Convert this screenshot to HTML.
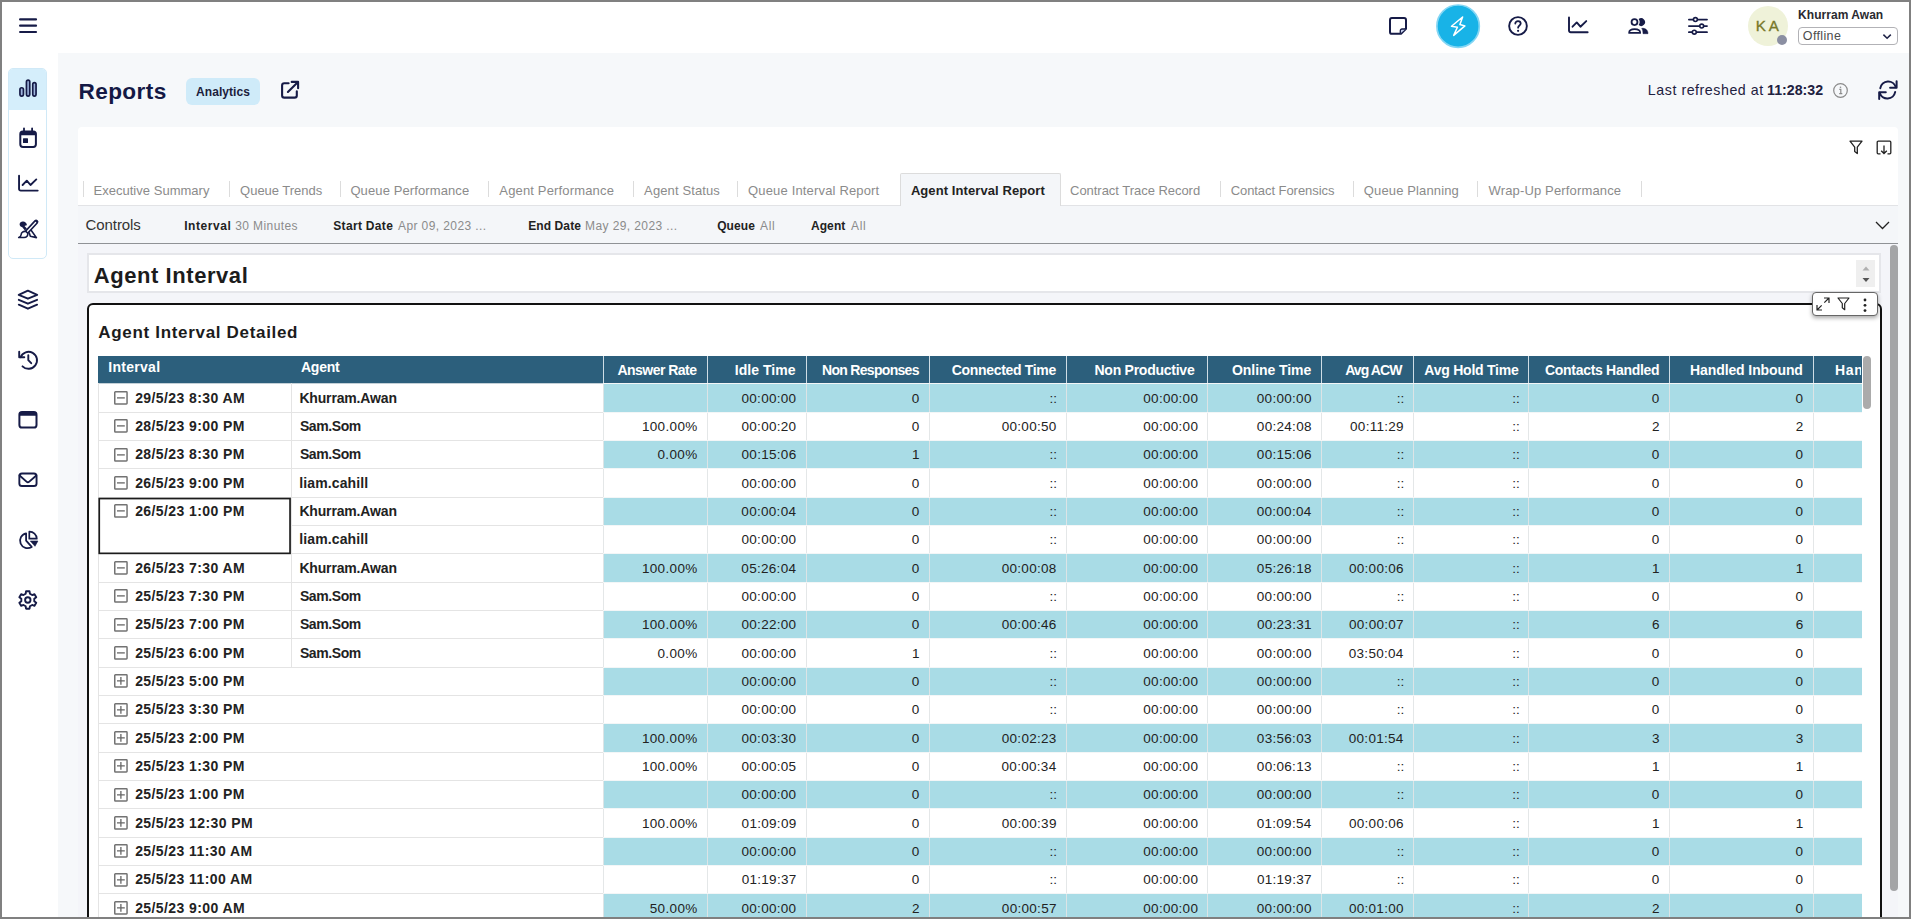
<!DOCTYPE html>
<html lang="en"><head><meta charset="utf-8"><title>Reports - Agent Interval Report</title>
<style>
html,body{margin:0;padding:0}
body{width:1911px;height:919px;overflow:hidden;position:relative;background:#f6f8fa;font-family:"Liberation Sans",sans-serif;}
.t{position:absolute;white-space:nowrap;display:block}
.abs{position:absolute}
svg{position:absolute;overflow:visible}
.ic{fill:none;stroke:#161b47;stroke-width:1.8;stroke-linecap:round;stroke-linejoin:round}
.frame{position:absolute;left:0;top:0;width:1907px;height:915px;border:2px solid #808080;z-index:50;pointer-events:none}
</style></head><body>

<div class="abs" style="left:0;top:0;width:1911px;height:53px;background:#fff"></div>
<div class="abs" style="left:0;top:0;width:58px;height:919px;background:#fff"></div>
<svg style="left:0;top:0" width="60" height="50" viewBox="0 0 60 50"><path class="ic" style="stroke-width:2.2" d="M20.100 19.400H36M20.100 25.700H36M20.100 32H36"/></svg>
<div class="abs" style="left:8.300px;top:67.800px;width:36.400px;height:189px;border:1.500px solid #d0e9f7;border-radius:5px;background:#fff;overflow:hidden"><div style="height:41px;background:#d5eefb"></div></div>
<svg style="left:0;top:0" width="1911" height="919" viewBox="0 0 1911 919"><rect x="19.95" y="87.75" width="3.50" height="8.30" rx="1.7" fill="#9fb4dd" stroke="#161b47" stroke-width="1.7"/><rect x="26.45" y="80.05" width="3.30" height="16.00" rx="1.7" fill="#9fb4dd" stroke="#161b47" stroke-width="1.7"/><rect x="32.75" y="82.55" width="3.30" height="13.50" rx="1.7" fill="#9fb4dd" stroke="#161b47" stroke-width="1.7"/><rect x="20.30" y="131.60" width="15.60" height="15.30" rx="2.6" fill="none" stroke="#161b47" stroke-width="2.0"/><path d="M20 135.3V133.200a1.800 1.800 0 0 1 1.800-1.800H34.400a1.800 1.800 0 0 1 1.800 1.800V135.300z" fill="#161b47"/><path d="M24 128.300V131M32.100 128.300V131" fill="none" stroke="#161b47" stroke-width="1.8" stroke-linecap="round" stroke-linejoin="round" /><rect x="23" y="138.200" width="5" height="4.900" rx=".5" fill="#161b47"/><path d="M19.05 175.80V188.90a1.700 1.700 0 0 0 1.700 1.700H37.70" fill="none" stroke="#161b47" stroke-width="1.9" stroke-linecap="round" stroke-linejoin="round" /><path d="M22.60 185.00L26.80 180.70L30.50 185.00L36.30 179.40" fill="none" stroke="#161b47" stroke-width="1.9" stroke-linecap="round" stroke-linejoin="round" /><path d="M19.600 224.300c0-1.900 1.800-3 3.600-2.800 1.800.2 3.200 1.300 3.600 2.900.2.700-.4 1.100-1 1.200l-1.300.3 2.400 2.600-2 1.900-2.600-3.200c-1.600-.2-2.700-1.400-2.700-2.900z" fill="#161b47"/><path d="M36.100 221.900L26.200 232.600" fill="none" stroke="#161b47" stroke-width="4.6" stroke-linecap="round" stroke-linejoin="round" stroke-linecap="butt"/><path d="M35.600 222.500L27.500 231.200" fill="none" stroke="#fff" stroke-width="1.3" stroke-linecap="round" stroke-linejoin="round" /><path d="M25.800 231.500c-2.700-.5-4.500 1-4.700 3.200-.1 1.300-.9 2.300-2.400 2.800h5.300c2.600 0 4.300-2 3.700-4.400z" fill="#fff" stroke="#161b47" stroke-width="1.6" stroke-linecap="round" stroke-linejoin="round" /><path d="M31.300 230.500L36.400 237.600L30.300 236.200L29.300 233" fill="none" stroke="#161b47" stroke-width="1.6" stroke-linecap="round" stroke-linejoin="round" /><path d="M27.900 290.600L37.200 294.800L27.900 298.700L18.700 294.800z" fill="none" stroke="#161b47" stroke-width="1.9" stroke-linecap="round" stroke-linejoin="round" /><path d="M18.800 299.800L27.900 303.700L37.100 299.800" fill="none" stroke="#161b47" stroke-width="1.9" stroke-linecap="round" stroke-linejoin="round" /><path d="M18.800 304.700L27.900 308.700L37.100 304.700" fill="none" stroke="#161b47" stroke-width="1.9" stroke-linecap="round" stroke-linejoin="round" /><path d="M20.600 357.200A8.500 8.500 0 1 1 22.500 366.300" fill="none" stroke="#161b47" stroke-width="1.9" stroke-linecap="round" stroke-linejoin="round" /><path d="M19.200 351.800V357.200H24.300" fill="none" stroke="#161b47" stroke-width="1.9" stroke-linecap="round" stroke-linejoin="round" /><path d="M28.300 355.300V360.200L31.200 363.200" fill="none" stroke="#161b47" stroke-width="1.9" stroke-linecap="round" stroke-linejoin="round" /><rect x="19.40" y="412.10" width="17.10" height="15.40" rx="2.6" fill="none" stroke="#161b47" stroke-width="2.0"/><path d="M19.200 415.800V413.800a1.900 1.900 0 0 1 1.900-1.900H34.800a1.900 1.900 0 0 1 1.900 1.900V415.800z" fill="#161b47"/><rect x="19.35" y="473.55" width="17.20" height="12.50" rx="2.6" fill="none" stroke="#161b47" stroke-width="1.9"/><path d="M19.600 475.500L26.500 481.600a2.100 2.100 0 0 0 2.800 0L36.300 475.500" fill="none" stroke="#161b47" stroke-width="1.9" stroke-linecap="round" stroke-linejoin="round" /><path d="M26.100 533.300A7.500 7.500 0 1 0 31.700 546.900L26.100 540.600z" fill="none" stroke="#161b47" stroke-width="1.8" stroke-linecap="round" stroke-linejoin="round" /><path d="M29.300 531.700V538.700H36.800A7.300 7.300 0 0 0 29.300 531.700z" fill="none" stroke="#161b47" stroke-width="1.7" stroke-linecap="round" stroke-linejoin="round" /><path d="M30.300 541H37.900L35 546.300z" fill="#161b47" stroke="#161b47" stroke-width=".6" stroke-linejoin="round"/><path d="M26.04 591.28L29.56 591.28L29.91 593.74L32.16 595.05L34.48 594.11L36.24 597.16L34.27 598.70L34.27 601.30L36.24 602.84L34.48 605.89L32.16 604.95L29.91 606.26L29.56 608.72L26.04 608.72L25.69 606.26L23.44 604.95L21.12 605.89L19.36 602.84L21.33 601.30L21.33 598.70L19.36 597.16L21.12 594.11L23.44 595.05L25.69 593.74z" fill="none" stroke="#161b47" stroke-width="1.9" stroke-linecap="round" stroke-linejoin="round" /><circle cx="27.800" cy="600" r="2.700" fill="none" stroke="#161b47" stroke-width="1.900"/><path d="M1391.900 18.100H1404.100a1.900 1.900 0 0 1 1.900 1.900V28.800L1401 33.800H1391.900a1.900 1.900 0 0 1-1.900-1.900V20a1.900 1.900 0 0 1 1.900-1.900z" fill="none" stroke="#161b47" stroke-width="2.0" stroke-linecap="round" stroke-linejoin="round" /><path d="M1400.300 33.600V30.700a1.700 1.700 0 0 1 1.700-1.700H1405.700" fill="#c6d0ee" stroke="#161b47" stroke-width="1.300" stroke-linejoin="round"/><circle cx="1458.100" cy="26.200" r="21.200" fill="#18b3e7" stroke="#83d6f4" stroke-width="1.700"/><path d="M1462.600 17L1451.500 26.300L1457.400 27.200L1453.700 35.400L1464.900 25.900L1459.900 24.600z" fill="none" stroke="#fff" stroke-width="1.5" stroke-linecap="round" stroke-linejoin="round" /><circle cx="1518" cy="26" r="8.850" fill="none" stroke="#161b47" stroke-width="1.900"/><path d="M1515.300 23.600a2.700 2.500 0 0 1 5.400 0c0 1.900-2.600 1.900-2.600 4.100" fill="none" stroke="#161b47" stroke-width="1.8" stroke-linecap="round" stroke-linejoin="round" /><circle cx="1518.100" cy="30.800" r="1.100" fill="#161b47"/><path d="M1569.00 17.50V30.60a1.700 1.700 0 0 0 1.700 1.700H1587.65" fill="none" stroke="#161b47" stroke-width="1.9" stroke-linecap="round" stroke-linejoin="round" /><path d="M1572.55 26.70L1576.75 22.40L1580.45 26.70L1586.25 21.10" fill="none" stroke="#161b47" stroke-width="1.9" stroke-linecap="round" stroke-linejoin="round" /><circle cx="1634.500" cy="22.100" r="2.950" fill="none" stroke="#161b47" stroke-width="1.800"/><path d="M1629.100 32.900c0-2.700 2.400-3.700 5.500-3.700s5.600 1 5.600 3.700z" fill="none" stroke="#161b47" stroke-width="1.7" stroke-linecap="round" stroke-linejoin="round" /><path d="M1638.620 19.090A3.900 3.900 0 1 1 1638.620 25.110A5.100 5.100 0 0 0 1638.620 19.090z" fill="#161b47"/><path d="M1641.700 28.400c3.600-.6 6.300 1.600 6.300 5.300h-5c0-2.400-.3-3.800-1.300-5.300z" fill="#161b47" stroke="#161b47" stroke-width=".5" stroke-linejoin="round"/><path d="M1688.900 19.600H1707M1688.900 26.100H1707M1688.900 32.200H1707" fill="none" stroke="#161b47" stroke-width="1.8" stroke-linecap="round" stroke-linejoin="round" /><circle cx="1695.4" cy="19.6" r="1.950" fill="#fff" stroke="#161b47" stroke-width="1.600"/><circle cx="1701.7" cy="26.1" r="1.950" fill="#fff" stroke="#161b47" stroke-width="1.600"/><circle cx="1694.3" cy="32.2" r="1.950" fill="#fff" stroke="#161b47" stroke-width="1.600"/><path d="M288.600 83.300H284.300a2.200 2.200 0 0 0-2.200 2.200V95.400a2.200 2.200 0 0 0 2.200 2.200H294.600a2.200 2.200 0 0 0 2.200-2.200V91.300" fill="none" stroke="#161b47" stroke-width="2.1" stroke-linecap="round" stroke-linejoin="round" /><path d="M287.900 92L298 81.900M291.700 81.900H298.100V88.200" fill="none" stroke="#161b47" stroke-width="2.1" stroke-linecap="round" stroke-linejoin="round" /><path d="M1880.300 88.200A8 8 0 0 1 1895.900 87.300" fill="none" stroke="#161b47" stroke-width="2.0" stroke-linecap="round" stroke-linejoin="round" /><path d="M1896.600 81.300V87.800H1890.100" fill="none" stroke="#161b47" stroke-width="2.0" stroke-linecap="round" stroke-linejoin="round" /><path d="M1895.200 91.900A8 8 0 0 1 1879.700 92.900" fill="none" stroke="#161b47" stroke-width="2.0" stroke-linecap="round" stroke-linejoin="round" /><path d="M1879.200 99V92.300H1885.800" fill="none" stroke="#161b47" stroke-width="2.0" stroke-linecap="round" stroke-linejoin="round" /></svg>
<div class="abs" style="left:1748px;top:6px;width:40px;height:40px;border-radius:50%;background:#eff2d9"></div>
<span class="t" style="left:1755.78px;top:16.90px;font-size:15.2px;line-height:17px;color:#77782a;letter-spacing:2.762px;-webkit-text-stroke:0.35px #77782a;">KA</span>
<div class="abs" style="left:1776.900px;top:34.800px;width:10.200px;height:10.200px;border-radius:50%;background:#8b8fa2"></div>
<span class="t" style="left:1798.12px;top:7.90px;font-size:12px;line-height:14px;color:#2a2a30;letter-spacing:0.037px;font-weight:700;">Khurram Awan</span>
<div class="abs" style="left:1798px;top:27px;width:98px;height:15.500px;border:1px solid #b2b2b6;border-radius:4px;background:#fff"></div>
<span class="t" style="left:1802.84px;top:28.80px;font-size:12.5px;line-height:14px;color:#4d4d4d;letter-spacing:0.353px;">Offline</span>
<svg style="left:1880px;top:30px" width="14" height="12" viewBox="0 0 14 12"><path d="M3.400 4.600L7.100 8.300L10.800 4.600" style="fill:none;stroke:#1f2347;stroke-width:1.500"/></svg>
<span class="t" style="left:78.53px;top:78.80px;font-size:22.6px;line-height:25px;color:#141945;letter-spacing:0.391px;font-weight:700;">Reports</span>
<div class="abs" style="left:186.300px;top:78px;width:73.400px;height:26.500px;border-radius:6px;background:#cfebf9"></div>
<span class="t" style="left:196.10px;top:85.00px;font-size:12px;line-height:14px;color:#1b1d3c;letter-spacing:0.051px;font-weight:700;">Analytics</span>
<span class="t" style="left:1647.86px;top:82.00px;font-size:14.2px;line-height:16px;color:#1e2140;letter-spacing:0.552px;">Last refreshed at</span>
<span class="t" style="left:1767.11px;top:82.00px;font-size:14.2px;line-height:16px;color:#1e2140;letter-spacing:-0.005px;font-weight:700;">11:28:32</span>
<svg style="left:1833px;top:83px" width="15" height="15" viewBox="0 0 15 15"><circle cx="7.500" cy="7.500" r="6.800" style="fill:none;stroke:#8a8a8a;stroke-width:1.200"/><path d="M6.300 6.300H7.800V10.600M6.200 10.700H9.300" style="fill:none;stroke:#8a8a8a;stroke-width:1.200"/><circle cx="7.500" cy="4.200" r=".8" style="fill:#8a8a8a"/></svg>
<div class="abs" style="left:77.500px;top:126.500px;width:1820.500px;height:79px;background:#fff;border-radius:4px 4px 0 0"></div>
<svg style="left:1849px;top:140px" width="14" height="15" viewBox="0 0 14 15"><path d="M1 1.200H13L8.300 7.200V13.500L5.700 11.500V7.200z" style="fill:none;stroke:#222;stroke-width:1.300;stroke-linejoin:round"/></svg>
<svg style="left:1876px;top:140px" width="16" height="15" viewBox="0 0 16 15"><path d="M4.500 13.800H2.200a1 1 0 0 1-1-1V2.200a1 1 0 0 1 1-1H13.800a1 1 0 0 1 1 1V12.800a1 1 0 0 1-1 1H11.500M8 5.500V13.300M5.200 10.700L8 13.500L10.800 10.700" style="fill:none;stroke:#222;stroke-width:1.300"/></svg>
<div class="abs" style="left:83.1px;top:181px;width:1px;height:16px;background:#dcdcdc"></div>
<div class="abs" style="left:228.7px;top:181px;width:1px;height:16px;background:#dcdcdc"></div>
<div class="abs" style="left:339.9px;top:181px;width:1px;height:16px;background:#dcdcdc"></div>
<div class="abs" style="left:487.9px;top:181px;width:1px;height:16px;background:#dcdcdc"></div>
<div class="abs" style="left:632.8px;top:181px;width:1px;height:16px;background:#dcdcdc"></div>
<div class="abs" style="left:736.9px;top:181px;width:1px;height:16px;background:#dcdcdc"></div>
<div class="abs" style="left:1219.9px;top:181px;width:1px;height:16px;background:#dcdcdc"></div>
<div class="abs" style="left:1352.7px;top:181px;width:1px;height:16px;background:#dcdcdc"></div>
<div class="abs" style="left:1476.8px;top:181px;width:1px;height:16px;background:#dcdcdc"></div>
<div class="abs" style="left:1640.8px;top:181px;width:1px;height:16px;background:#dcdcdc"></div>
<div class="abs" style="left:77.500px;top:204.500px;width:1820.500px;height:1px;background:#e2e3e6"></div>
<div class="abs" style="left:900px;top:173px;width:158.500px;height:32.500px;background:#f4f6f9;border:1px solid #dcdcdc;border-bottom:none;border-radius:2px 2px 0 0"></div>
<span class="t" style="left:93.46px;top:183.00px;font-size:13px;line-height:15px;color:#8b8b8b;letter-spacing:0.027px;">Executive Summary</span>
<span class="t" style="left:240.11px;top:183.00px;font-size:13px;line-height:15px;color:#8b8b8b;letter-spacing:-0.032px;">Queue Trends</span>
<span class="t" style="left:350.42px;top:183.00px;font-size:13px;line-height:15px;color:#8b8b8b;letter-spacing:0.105px;">Queue Performance</span>
<span class="t" style="left:499.30px;top:183.00px;font-size:13px;line-height:15px;color:#8b8b8b;letter-spacing:0.160px;">Agent Performance</span>
<span class="t" style="left:644.10px;top:183.00px;font-size:13px;line-height:15px;color:#8b8b8b;letter-spacing:0.118px;">Agent Status</span>
<span class="t" style="left:748.01px;top:183.00px;font-size:13px;line-height:15px;color:#8b8b8b;letter-spacing:0.166px;">Queue Interval Report</span>
<span class="t" style="left:1070.05px;top:183.00px;font-size:13px;line-height:15px;color:#8b8b8b;letter-spacing:-0.034px;">Contract Trace Record</span>
<span class="t" style="left:1230.65px;top:183.00px;font-size:13px;line-height:15px;color:#8b8b8b;letter-spacing:-0.061px;">Contact Forensics</span>
<span class="t" style="left:1363.82px;top:183.00px;font-size:13px;line-height:15px;color:#8b8b8b;letter-spacing:0.135px;">Queue Planning</span>
<span class="t" style="left:1488.47px;top:183.00px;font-size:13px;line-height:15px;color:#8b8b8b;letter-spacing:0.154px;">Wrap-Up Performance</span>
<span class="t" style="left:910.88px;top:183.00px;font-size:13px;line-height:15px;color:#222;letter-spacing:0.084px;font-weight:700;">Agent Interval Report</span>
<div class="abs" style="left:77.500px;top:205.500px;width:1820.500px;height:38px;background:#f4f6f9"></div>
<div class="abs" style="left:77.500px;top:243px;width:1820.500px;height:1px;background:#8f9296"></div>
<span class="t" style="left:85.55px;top:216.00px;font-size:15px;line-height:17px;color:#333;letter-spacing:-0.086px;">Controls</span>
<span class="t" style="left:184.22px;top:219.30px;font-size:12px;line-height:14px;color:#222;letter-spacing:0.561px;font-weight:700;">Interval</span>
<span class="t" style="left:235.15px;top:219.30px;font-size:12px;line-height:14px;color:#8b8b8b;letter-spacing:0.418px;">30 Minutes</span>
<span class="t" style="left:333.27px;top:219.30px;font-size:12px;line-height:14px;color:#222;letter-spacing:0.317px;font-weight:700;">Start Date</span>
<span class="t" style="left:398.00px;top:219.30px;font-size:12px;line-height:14px;color:#8b8b8b;letter-spacing:0.402px;">Apr 09, 2023 ...</span>
<span class="t" style="left:528.22px;top:219.30px;font-size:12px;line-height:14px;color:#222;letter-spacing:0.097px;font-weight:700;">End Date</span>
<span class="t" style="left:585.04px;top:219.30px;font-size:12px;line-height:14px;color:#8b8b8b;letter-spacing:0.400px;">May 29, 2023 ...</span>
<span class="t" style="left:717.22px;top:219.30px;font-size:12px;line-height:14px;color:#222;letter-spacing:0.062px;font-weight:700;">Queue</span>
<span class="t" style="left:760.00px;top:219.30px;font-size:12px;line-height:14px;color:#8b8b8b;letter-spacing:0.715px;">All</span>
<span class="t" style="left:810.90px;top:219.30px;font-size:12px;line-height:14px;color:#222;letter-spacing:0.107px;font-weight:700;">Agent</span>
<span class="t" style="left:851.00px;top:219.30px;font-size:12px;line-height:14px;color:#8b8b8b;letter-spacing:0.715px;">All</span>
<svg style="left:1875px;top:220.500px" width="15" height="9" viewBox="0 0 15 9"><path d="M1 1L7.500 7.500L14 1" style="fill:none;stroke:#222;stroke-width:1.300"/></svg>
<div class="abs" style="left:77.500px;top:244px;width:1820.500px;height:675px;background:#f4f5f9"></div>
<div class="abs" style="left:1890px;top:244.500px;width:8px;height:646px;border-radius:4px;background:#a4a5a7"></div>
<div class="abs" style="left:87.400px;top:253.400px;width:1790px;height:35.800px;background:#fff;border:2px solid #e5e6ea"></div>
<span class="t" style="left:93.85px;top:262.80px;font-size:22px;line-height:25px;color:#1c1c1c;letter-spacing:0.554px;font-weight:700;">Agent Interval</span>
<div class="abs" style="left:1856px;top:260px;width:19px;height:26.500px;background:#efefef"></div>
<svg style="left:1861.500px;top:265.500px" width="8" height="18" viewBox="0 0 8 18"><path d="M0.500 4.500L4 0.500L7.500 4.500z" fill="#b0b0b0"/><path d="M0.500 12L4 16L7.500 12z" fill="#555"/></svg>
<div class="abs" style="left:87px;top:303px;width:1791px;height:640px;background:#fff;border:2px solid #111;border-radius:6px"></div>
<span class="t" style="left:98.28px;top:323.20px;font-size:17px;line-height:19px;color:#1c1c1c;letter-spacing:0.683px;font-weight:700;">Agent Interval Detailed</span>
<div class="abs" style="left:1812px;top:292px;width:63.500px;height:21.500px;background:#fff;border:1px solid #666;border-radius:4px;box-shadow:0 2px 4px rgba(0,0,0,.35)"></div>
<svg style="left:1815.500px;top:297px" width="14" height="14" viewBox="0 0 14 14"><path d="M8 1H13V6M13 1L8.300 5.700M6 13H1V8M1 13L5.700 8.300" style="fill:none;stroke:#222;stroke-width:1.200"/></svg>
<svg style="left:1836.500px;top:296.500px" width="13" height="14" viewBox="0 0 13 14"><path d="M1 1H12L7.700 6.500V12.700L5.300 10.800V6.500z" style="fill:none;stroke:#222;stroke-width:1.200;stroke-linejoin:round"/></svg>
<svg style="left:1862.500px;top:297.500px" width="4" height="15" viewBox="0 0 4 15"><circle cx="2" cy="2" r="1.400" fill="#222"/><circle cx="2" cy="7.300" r="1.400" fill="#222"/><circle cx="2" cy="12.600" r="1.400" fill="#222"/></svg>
<div class="abs" style="left:98.0px;top:356px;width:1764.0px;height:27px;background:#2c5f7c"></div>
<div class="abs" style="left:98.0px;top:383px;width:505.0px;height:1px;background:#c3d0d7"></div>
<div class="abs" style="left:603px;top:383px;width:1259px;height:1px;background:#9fc3d1"></div>
<span class="t" style="left:108.19px;top:359.00px;font-size:14px;line-height:16px;color:#fff;letter-spacing:0.298px;font-weight:700;">Interval</span>
<span class="t" style="left:300.95px;top:359.00px;font-size:14px;line-height:16px;color:#fff;letter-spacing:-0.216px;font-weight:700;">Agent</span>
<span class="t" style="left:617.45px;top:362.00px;font-size:14px;line-height:16px;color:#fff;letter-spacing:-0.530px;font-weight:700;">Answer Rate</span>
<span class="t" style="left:734.79px;top:362.00px;font-size:14px;line-height:16px;color:#fff;letter-spacing:0.032px;font-weight:700;">Idle Time</span>
<span class="t" style="left:822.09px;top:362.00px;font-size:14px;line-height:16px;color:#fff;letter-spacing:-0.703px;font-weight:700;">Non Responses</span>
<span class="t" style="left:951.84px;top:362.00px;font-size:14px;line-height:16px;color:#fff;letter-spacing:-0.325px;font-weight:700;">Connected Time</span>
<span class="t" style="left:1094.49px;top:362.00px;font-size:14px;line-height:16px;color:#fff;letter-spacing:-0.251px;font-weight:700;">Non Productive</span>
<span class="t" style="left:1232.04px;top:362.00px;font-size:14px;line-height:16px;color:#fff;letter-spacing:-0.066px;font-weight:700;">Online Time</span>
<span class="t" style="left:1345.15px;top:362.00px;font-size:14px;line-height:16px;color:#fff;letter-spacing:-0.901px;font-weight:700;">Avg ACW</span>
<span class="t" style="left:1424.35px;top:362.00px;font-size:14px;line-height:16px;color:#fff;letter-spacing:-0.235px;font-weight:700;">Avg Hold Time</span>
<span class="t" style="left:1544.94px;top:362.00px;font-size:14px;line-height:16px;color:#fff;letter-spacing:-0.289px;font-weight:700;">Contacts Handled</span>
<span class="t" style="left:1690.09px;top:362.00px;font-size:14px;line-height:16px;color:#fff;letter-spacing:-0.106px;font-weight:700;">Handled Inbound</span>
<span class="t" style="left:1835.09px;top:362.00px;font-size:14px;line-height:16px;color:#fff;letter-spacing:0.663px;font-weight:700;width:26px;overflow:hidden;">Han</span>
<div class="abs" style="left:602.9px;top:356px;width:1px;height:27px;background:#cfdde5"></div>
<div class="abs" style="left:706.7px;top:356px;width:1px;height:27px;background:#cfdde5"></div>
<div class="abs" style="left:805.5px;top:356px;width:1px;height:27px;background:#cfdde5"></div>
<div class="abs" style="left:928.7px;top:356px;width:1px;height:27px;background:#cfdde5"></div>
<div class="abs" style="left:1065.7px;top:356px;width:1px;height:27px;background:#cfdde5"></div>
<div class="abs" style="left:1207.3px;top:356px;width:1px;height:27px;background:#cfdde5"></div>
<div class="abs" style="left:1320.8px;top:356px;width:1px;height:27px;background:#cfdde5"></div>
<div class="abs" style="left:1412.9px;top:356px;width:1px;height:27px;background:#cfdde5"></div>
<div class="abs" style="left:1528.4px;top:356px;width:1px;height:27px;background:#cfdde5"></div>
<div class="abs" style="left:1668.7px;top:356px;width:1px;height:27px;background:#cfdde5"></div>
<div class="abs" style="left:1812.5px;top:356px;width:1px;height:27px;background:#cfdde5"></div>
<div class="abs" style="left:603.4px;top:384px;width:1258.6px;height:28px;background:#a9dce6"></div>
<div class="abs" style="left:98.5px;top:412px;width:504.9px;height:1px;background:#e4e4e4"></div>
<svg style="left:114px;top:391px" width="14" height="14" viewBox="0 0 14 14"><rect x=".75" y=".75" width="12.300" height="12.300" rx=".7" style="fill:#fff;stroke:#737373;stroke-width:1.500"/><g style="fill:none;stroke:#666;stroke-width:1.300"><path d="M3 6.900H10.800" /></g></svg>
<span class="t" style="left:135.14px;top:389.73px;font-size:14px;line-height:16px;color:#222;letter-spacing:0.414px;font-weight:700;">29/5/23 8:30 AM</span>
<span class="t" style="left:299.39px;top:389.73px;font-size:14px;line-height:16px;color:#222;letter-spacing:-0.159px;font-weight:700;">Khurram.Awan</span>
<span class="t" style="left:741.49px;top:390.73px;font-size:13.5px;line-height:15px;color:#222;letter-spacing:0.295px;">00:00:00</span>
<span class="t" style="left:911.81px;top:390.73px;font-size:13.5px;line-height:15px;color:#222;">0</span>
<span class="t" style="left:1049.52px;top:390.73px;font-size:13.5px;line-height:15px;color:#222;">::</span>
<span class="t" style="left:1143.29px;top:390.73px;font-size:13.5px;line-height:15px;color:#222;letter-spacing:0.295px;">00:00:00</span>
<span class="t" style="left:1256.79px;top:390.73px;font-size:13.5px;line-height:15px;color:#222;letter-spacing:0.295px;">00:00:00</span>
<span class="t" style="left:1396.72px;top:390.73px;font-size:13.5px;line-height:15px;color:#222;">::</span>
<span class="t" style="left:1512.22px;top:390.73px;font-size:13.5px;line-height:15px;color:#222;">::</span>
<span class="t" style="left:1651.81px;top:390.73px;font-size:13.5px;line-height:15px;color:#222;">0</span>
<span class="t" style="left:1795.61px;top:390.73px;font-size:13.5px;line-height:15px;color:#222;">0</span>
<div class="abs" style="left:98.5px;top:440px;width:504.9px;height:1px;background:#e4e4e4"></div>
<svg style="left:114px;top:419px" width="14" height="14" viewBox="0 0 14 14"><rect x=".75" y=".75" width="12.300" height="12.300" rx=".7" style="fill:#fff;stroke:#737373;stroke-width:1.500"/><g style="fill:none;stroke:#666;stroke-width:1.300"><path d="M3 6.900H10.800" /></g></svg>
<span class="t" style="left:135.14px;top:418.06px;font-size:14px;line-height:16px;color:#222;letter-spacing:0.412px;font-weight:700;">28/5/23 9:00 PM</span>
<span class="t" style="left:299.92px;top:418.06px;font-size:14px;line-height:16px;color:#222;letter-spacing:-0.408px;font-weight:700;">Sam.Som</span>
<span class="t" style="left:641.91px;top:419.06px;font-size:13.5px;line-height:15px;color:#222;letter-spacing:0.346px;">100.00%</span>
<span class="t" style="left:741.49px;top:419.06px;font-size:13.5px;line-height:15px;color:#222;letter-spacing:0.295px;">00:00:20</span>
<span class="t" style="left:911.81px;top:419.06px;font-size:13.5px;line-height:15px;color:#222;">0</span>
<span class="t" style="left:1001.69px;top:419.06px;font-size:13.5px;line-height:15px;color:#222;letter-spacing:0.295px;">00:00:50</span>
<span class="t" style="left:1143.29px;top:419.06px;font-size:13.5px;line-height:15px;color:#222;letter-spacing:0.295px;">00:00:00</span>
<span class="t" style="left:1256.83px;top:419.06px;font-size:13.5px;line-height:15px;color:#222;letter-spacing:0.295px;">00:24:08</span>
<span class="t" style="left:1350.05px;top:419.06px;font-size:13.5px;line-height:15px;color:#222;letter-spacing:0.288px;">00:11:29</span>
<span class="t" style="left:1512.22px;top:419.06px;font-size:13.5px;line-height:15px;color:#222;">::</span>
<span class="t" style="left:1651.95px;top:419.06px;font-size:13.5px;line-height:15px;color:#222;">2</span>
<span class="t" style="left:1795.75px;top:419.06px;font-size:13.5px;line-height:15px;color:#222;">2</span>
<div class="abs" style="left:603.4px;top:441px;width:1258.6px;height:27px;background:#a9dce6"></div>
<div class="abs" style="left:98.5px;top:468px;width:504.9px;height:1px;background:#e4e4e4"></div>
<svg style="left:114px;top:448px" width="14" height="14" viewBox="0 0 14 14"><rect x=".75" y=".75" width="12.300" height="12.300" rx=".7" style="fill:#fff;stroke:#737373;stroke-width:1.500"/><g style="fill:none;stroke:#666;stroke-width:1.300"><path d="M3 6.900H10.800" /></g></svg>
<span class="t" style="left:135.14px;top:446.40px;font-size:14px;line-height:16px;color:#222;letter-spacing:0.412px;font-weight:700;">28/5/23 8:30 PM</span>
<span class="t" style="left:299.92px;top:446.40px;font-size:14px;line-height:16px;color:#222;letter-spacing:-0.408px;font-weight:700;">Sam.Som</span>
<span class="t" style="left:657.47px;top:447.40px;font-size:13.5px;line-height:15px;color:#222;letter-spacing:0.374px;">0.00%</span>
<span class="t" style="left:741.56px;top:447.40px;font-size:13.5px;line-height:15px;color:#222;letter-spacing:0.294px;">00:15:06</span>
<span class="t" style="left:911.95px;top:447.40px;font-size:13.5px;line-height:15px;color:#222;">1</span>
<span class="t" style="left:1049.52px;top:447.40px;font-size:13.5px;line-height:15px;color:#222;">::</span>
<span class="t" style="left:1143.29px;top:447.40px;font-size:13.5px;line-height:15px;color:#222;letter-spacing:0.295px;">00:00:00</span>
<span class="t" style="left:1256.86px;top:447.40px;font-size:13.5px;line-height:15px;color:#222;letter-spacing:0.294px;">00:15:06</span>
<span class="t" style="left:1396.72px;top:447.40px;font-size:13.5px;line-height:15px;color:#222;">::</span>
<span class="t" style="left:1512.22px;top:447.40px;font-size:13.5px;line-height:15px;color:#222;">::</span>
<span class="t" style="left:1651.81px;top:447.40px;font-size:13.5px;line-height:15px;color:#222;">0</span>
<span class="t" style="left:1795.61px;top:447.40px;font-size:13.5px;line-height:15px;color:#222;">0</span>
<div class="abs" style="left:98.5px;top:497px;width:504.9px;height:1px;background:#e4e4e4"></div>
<svg style="left:114px;top:476px" width="14" height="14" viewBox="0 0 14 14"><rect x=".75" y=".75" width="12.300" height="12.300" rx=".7" style="fill:#fff;stroke:#737373;stroke-width:1.500"/><g style="fill:none;stroke:#666;stroke-width:1.300"><path d="M3 6.900H10.800" /></g></svg>
<span class="t" style="left:135.14px;top:474.73px;font-size:14px;line-height:16px;color:#222;letter-spacing:0.412px;font-weight:700;">26/5/23 9:00 PM</span>
<span class="t" style="left:299.36px;top:474.73px;font-size:14px;line-height:16px;color:#222;letter-spacing:0.103px;font-weight:700;">liam.cahill</span>
<span class="t" style="left:741.49px;top:475.73px;font-size:13.5px;line-height:15px;color:#222;letter-spacing:0.295px;">00:00:00</span>
<span class="t" style="left:911.81px;top:475.73px;font-size:13.5px;line-height:15px;color:#222;">0</span>
<span class="t" style="left:1049.52px;top:475.73px;font-size:13.5px;line-height:15px;color:#222;">::</span>
<span class="t" style="left:1143.29px;top:475.73px;font-size:13.5px;line-height:15px;color:#222;letter-spacing:0.295px;">00:00:00</span>
<span class="t" style="left:1256.79px;top:475.73px;font-size:13.5px;line-height:15px;color:#222;letter-spacing:0.295px;">00:00:00</span>
<span class="t" style="left:1396.72px;top:475.73px;font-size:13.5px;line-height:15px;color:#222;">::</span>
<span class="t" style="left:1512.22px;top:475.73px;font-size:13.5px;line-height:15px;color:#222;">::</span>
<span class="t" style="left:1651.81px;top:475.73px;font-size:13.5px;line-height:15px;color:#222;">0</span>
<span class="t" style="left:1795.61px;top:475.73px;font-size:13.5px;line-height:15px;color:#222;">0</span>
<div class="abs" style="left:603.4px;top:498px;width:1258.6px;height:27px;background:#a9dce6"></div>
<div class="abs" style="left:291px;top:525px;width:312.4px;height:1px;background:#e4e4e4"></div>
<svg style="left:114px;top:504px" width="14" height="14" viewBox="0 0 14 14"><rect x=".75" y=".75" width="12.300" height="12.300" rx=".7" style="fill:#fff;stroke:#737373;stroke-width:1.500"/><g style="fill:none;stroke:#666;stroke-width:1.300"><path d="M3 6.900H10.800" /></g></svg>
<span class="t" style="left:135.14px;top:503.06px;font-size:14px;line-height:16px;color:#222;letter-spacing:0.412px;font-weight:700;">26/5/23 1:00 PM</span>
<span class="t" style="left:299.39px;top:503.06px;font-size:14px;line-height:16px;color:#222;letter-spacing:-0.159px;font-weight:700;">Khurram.Awan</span>
<span class="t" style="left:741.35px;top:504.06px;font-size:13.5px;line-height:15px;color:#222;letter-spacing:0.296px;">00:00:04</span>
<span class="t" style="left:911.81px;top:504.06px;font-size:13.5px;line-height:15px;color:#222;">0</span>
<span class="t" style="left:1049.52px;top:504.06px;font-size:13.5px;line-height:15px;color:#222;">::</span>
<span class="t" style="left:1143.29px;top:504.06px;font-size:13.5px;line-height:15px;color:#222;letter-spacing:0.295px;">00:00:00</span>
<span class="t" style="left:1256.65px;top:504.06px;font-size:13.5px;line-height:15px;color:#222;letter-spacing:0.296px;">00:00:04</span>
<span class="t" style="left:1396.72px;top:504.06px;font-size:13.5px;line-height:15px;color:#222;">::</span>
<span class="t" style="left:1512.22px;top:504.06px;font-size:13.5px;line-height:15px;color:#222;">::</span>
<span class="t" style="left:1651.81px;top:504.06px;font-size:13.5px;line-height:15px;color:#222;">0</span>
<span class="t" style="left:1795.61px;top:504.06px;font-size:13.5px;line-height:15px;color:#222;">0</span>
<div class="abs" style="left:98.5px;top:553px;width:504.9px;height:1px;background:#e4e4e4"></div>
<span class="t" style="left:299.36px;top:531.39px;font-size:14px;line-height:16px;color:#222;letter-spacing:0.103px;font-weight:700;">liam.cahill</span>
<span class="t" style="left:741.49px;top:532.39px;font-size:13.5px;line-height:15px;color:#222;letter-spacing:0.295px;">00:00:00</span>
<span class="t" style="left:911.81px;top:532.39px;font-size:13.5px;line-height:15px;color:#222;">0</span>
<span class="t" style="left:1049.52px;top:532.39px;font-size:13.5px;line-height:15px;color:#222;">::</span>
<span class="t" style="left:1143.29px;top:532.39px;font-size:13.5px;line-height:15px;color:#222;letter-spacing:0.295px;">00:00:00</span>
<span class="t" style="left:1256.79px;top:532.39px;font-size:13.5px;line-height:15px;color:#222;letter-spacing:0.295px;">00:00:00</span>
<span class="t" style="left:1396.72px;top:532.39px;font-size:13.5px;line-height:15px;color:#222;">::</span>
<span class="t" style="left:1512.22px;top:532.39px;font-size:13.5px;line-height:15px;color:#222;">::</span>
<span class="t" style="left:1651.81px;top:532.39px;font-size:13.5px;line-height:15px;color:#222;">0</span>
<span class="t" style="left:1795.61px;top:532.39px;font-size:13.5px;line-height:15px;color:#222;">0</span>
<div class="abs" style="left:603.4px;top:554px;width:1258.6px;height:28px;background:#a9dce6"></div>
<div class="abs" style="left:98.5px;top:582px;width:504.9px;height:1px;background:#e4e4e4"></div>
<svg style="left:114px;top:561px" width="14" height="14" viewBox="0 0 14 14"><rect x=".75" y=".75" width="12.300" height="12.300" rx=".7" style="fill:#fff;stroke:#737373;stroke-width:1.500"/><g style="fill:none;stroke:#666;stroke-width:1.300"><path d="M3 6.900H10.800" /></g></svg>
<span class="t" style="left:135.14px;top:559.73px;font-size:14px;line-height:16px;color:#222;letter-spacing:0.414px;font-weight:700;">26/5/23 7:30 AM</span>
<span class="t" style="left:299.39px;top:559.73px;font-size:14px;line-height:16px;color:#222;letter-spacing:-0.159px;font-weight:700;">Khurram.Awan</span>
<span class="t" style="left:641.91px;top:560.73px;font-size:13.5px;line-height:15px;color:#222;letter-spacing:0.346px;">100.00%</span>
<span class="t" style="left:741.35px;top:560.73px;font-size:13.5px;line-height:15px;color:#222;letter-spacing:0.296px;">05:26:04</span>
<span class="t" style="left:911.81px;top:560.73px;font-size:13.5px;line-height:15px;color:#222;">0</span>
<span class="t" style="left:1001.73px;top:560.73px;font-size:13.5px;line-height:15px;color:#222;letter-spacing:0.295px;">00:00:08</span>
<span class="t" style="left:1143.29px;top:560.73px;font-size:13.5px;line-height:15px;color:#222;letter-spacing:0.295px;">00:00:00</span>
<span class="t" style="left:1256.83px;top:560.73px;font-size:13.5px;line-height:15px;color:#222;letter-spacing:0.295px;">05:26:18</span>
<span class="t" style="left:1348.96px;top:560.73px;font-size:13.5px;line-height:15px;color:#222;letter-spacing:0.294px;">00:00:06</span>
<span class="t" style="left:1512.22px;top:560.73px;font-size:13.5px;line-height:15px;color:#222;">::</span>
<span class="t" style="left:1651.95px;top:560.73px;font-size:13.5px;line-height:15px;color:#222;">1</span>
<span class="t" style="left:1795.75px;top:560.73px;font-size:13.5px;line-height:15px;color:#222;">1</span>
<div class="abs" style="left:98.5px;top:610px;width:504.9px;height:1px;background:#e4e4e4"></div>
<svg style="left:114px;top:589px" width="14" height="14" viewBox="0 0 14 14"><rect x=".75" y=".75" width="12.300" height="12.300" rx=".7" style="fill:#fff;stroke:#737373;stroke-width:1.500"/><g style="fill:none;stroke:#666;stroke-width:1.300"><path d="M3 6.900H10.800" /></g></svg>
<span class="t" style="left:135.14px;top:588.06px;font-size:14px;line-height:16px;color:#222;letter-spacing:0.412px;font-weight:700;">25/5/23 7:30 PM</span>
<span class="t" style="left:299.92px;top:588.06px;font-size:14px;line-height:16px;color:#222;letter-spacing:-0.408px;font-weight:700;">Sam.Som</span>
<span class="t" style="left:741.49px;top:589.06px;font-size:13.5px;line-height:15px;color:#222;letter-spacing:0.295px;">00:00:00</span>
<span class="t" style="left:911.81px;top:589.06px;font-size:13.5px;line-height:15px;color:#222;">0</span>
<span class="t" style="left:1049.52px;top:589.06px;font-size:13.5px;line-height:15px;color:#222;">::</span>
<span class="t" style="left:1143.29px;top:589.06px;font-size:13.5px;line-height:15px;color:#222;letter-spacing:0.295px;">00:00:00</span>
<span class="t" style="left:1256.79px;top:589.06px;font-size:13.5px;line-height:15px;color:#222;letter-spacing:0.295px;">00:00:00</span>
<span class="t" style="left:1396.72px;top:589.06px;font-size:13.5px;line-height:15px;color:#222;">::</span>
<span class="t" style="left:1512.22px;top:589.06px;font-size:13.5px;line-height:15px;color:#222;">::</span>
<span class="t" style="left:1651.81px;top:589.06px;font-size:13.5px;line-height:15px;color:#222;">0</span>
<span class="t" style="left:1795.61px;top:589.06px;font-size:13.5px;line-height:15px;color:#222;">0</span>
<div class="abs" style="left:603.4px;top:611px;width:1258.6px;height:27px;background:#a9dce6"></div>
<div class="abs" style="left:98.5px;top:638px;width:504.9px;height:1px;background:#e4e4e4"></div>
<svg style="left:114px;top:618px" width="14" height="14" viewBox="0 0 14 14"><rect x=".75" y=".75" width="12.300" height="12.300" rx=".7" style="fill:#fff;stroke:#737373;stroke-width:1.500"/><g style="fill:none;stroke:#666;stroke-width:1.300"><path d="M3 6.900H10.800" /></g></svg>
<span class="t" style="left:135.14px;top:616.39px;font-size:14px;line-height:16px;color:#222;letter-spacing:0.412px;font-weight:700;">25/5/23 7:00 PM</span>
<span class="t" style="left:299.92px;top:616.39px;font-size:14px;line-height:16px;color:#222;letter-spacing:-0.408px;font-weight:700;">Sam.Som</span>
<span class="t" style="left:641.91px;top:617.39px;font-size:13.5px;line-height:15px;color:#222;letter-spacing:0.346px;">100.00%</span>
<span class="t" style="left:741.49px;top:617.39px;font-size:13.5px;line-height:15px;color:#222;letter-spacing:0.295px;">00:22:00</span>
<span class="t" style="left:911.81px;top:617.39px;font-size:13.5px;line-height:15px;color:#222;">0</span>
<span class="t" style="left:1001.76px;top:617.39px;font-size:13.5px;line-height:15px;color:#222;letter-spacing:0.294px;">00:00:46</span>
<span class="t" style="left:1143.29px;top:617.39px;font-size:13.5px;line-height:15px;color:#222;letter-spacing:0.295px;">00:00:00</span>
<span class="t" style="left:1256.93px;top:617.39px;font-size:13.5px;line-height:15px;color:#222;letter-spacing:0.294px;">00:23:31</span>
<span class="t" style="left:1349.03px;top:617.39px;font-size:13.5px;line-height:15px;color:#222;letter-spacing:0.294px;">00:00:07</span>
<span class="t" style="left:1512.22px;top:617.39px;font-size:13.5px;line-height:15px;color:#222;">::</span>
<span class="t" style="left:1651.88px;top:617.39px;font-size:13.5px;line-height:15px;color:#222;">6</span>
<span class="t" style="left:1795.68px;top:617.39px;font-size:13.5px;line-height:15px;color:#222;">6</span>
<div class="abs" style="left:98.5px;top:667px;width:504.9px;height:1px;background:#e4e4e4"></div>
<svg style="left:114px;top:646px" width="14" height="14" viewBox="0 0 14 14"><rect x=".75" y=".75" width="12.300" height="12.300" rx=".7" style="fill:#fff;stroke:#737373;stroke-width:1.500"/><g style="fill:none;stroke:#666;stroke-width:1.300"><path d="M3 6.900H10.800" /></g></svg>
<span class="t" style="left:135.14px;top:644.73px;font-size:14px;line-height:16px;color:#222;letter-spacing:0.412px;font-weight:700;">25/5/23 6:00 PM</span>
<span class="t" style="left:299.92px;top:644.73px;font-size:14px;line-height:16px;color:#222;letter-spacing:-0.408px;font-weight:700;">Sam.Som</span>
<span class="t" style="left:657.47px;top:645.73px;font-size:13.5px;line-height:15px;color:#222;letter-spacing:0.374px;">0.00%</span>
<span class="t" style="left:741.49px;top:645.73px;font-size:13.5px;line-height:15px;color:#222;letter-spacing:0.295px;">00:00:00</span>
<span class="t" style="left:911.95px;top:645.73px;font-size:13.5px;line-height:15px;color:#222;">1</span>
<span class="t" style="left:1049.52px;top:645.73px;font-size:13.5px;line-height:15px;color:#222;">::</span>
<span class="t" style="left:1143.29px;top:645.73px;font-size:13.5px;line-height:15px;color:#222;letter-spacing:0.295px;">00:00:00</span>
<span class="t" style="left:1256.79px;top:645.73px;font-size:13.5px;line-height:15px;color:#222;letter-spacing:0.295px;">00:00:00</span>
<span class="t" style="left:1348.75px;top:645.73px;font-size:13.5px;line-height:15px;color:#222;letter-spacing:0.296px;">03:50:04</span>
<span class="t" style="left:1512.22px;top:645.73px;font-size:13.5px;line-height:15px;color:#222;">::</span>
<span class="t" style="left:1651.81px;top:645.73px;font-size:13.5px;line-height:15px;color:#222;">0</span>
<span class="t" style="left:1795.61px;top:645.73px;font-size:13.5px;line-height:15px;color:#222;">0</span>
<div class="abs" style="left:603.4px;top:668px;width:1258.6px;height:27px;background:#a9dce6"></div>
<div class="abs" style="left:98.5px;top:695px;width:504.9px;height:1px;background:#e4e4e4"></div>
<svg style="left:114px;top:674px" width="14" height="14" viewBox="0 0 14 14"><rect x=".75" y=".75" width="12.300" height="12.300" rx=".7" style="fill:#fff;stroke:#737373;stroke-width:1.500"/><g style="fill:none;stroke:#666;stroke-width:1.300"><path d="M3 6.900H10.800M6.900 3V10.800"/></g></svg>
<span class="t" style="left:135.14px;top:673.06px;font-size:14px;line-height:16px;color:#222;letter-spacing:0.412px;font-weight:700;">25/5/23 5:00 PM</span>
<span class="t" style="left:741.49px;top:674.06px;font-size:13.5px;line-height:15px;color:#222;letter-spacing:0.295px;">00:00:00</span>
<span class="t" style="left:911.81px;top:674.06px;font-size:13.5px;line-height:15px;color:#222;">0</span>
<span class="t" style="left:1049.52px;top:674.06px;font-size:13.5px;line-height:15px;color:#222;">::</span>
<span class="t" style="left:1143.29px;top:674.06px;font-size:13.5px;line-height:15px;color:#222;letter-spacing:0.295px;">00:00:00</span>
<span class="t" style="left:1256.79px;top:674.06px;font-size:13.5px;line-height:15px;color:#222;letter-spacing:0.295px;">00:00:00</span>
<span class="t" style="left:1396.72px;top:674.06px;font-size:13.5px;line-height:15px;color:#222;">::</span>
<span class="t" style="left:1512.22px;top:674.06px;font-size:13.5px;line-height:15px;color:#222;">::</span>
<span class="t" style="left:1651.81px;top:674.06px;font-size:13.5px;line-height:15px;color:#222;">0</span>
<span class="t" style="left:1795.61px;top:674.06px;font-size:13.5px;line-height:15px;color:#222;">0</span>
<div class="abs" style="left:98.5px;top:723px;width:504.9px;height:1px;background:#e4e4e4"></div>
<svg style="left:114px;top:703px" width="14" height="14" viewBox="0 0 14 14"><rect x=".75" y=".75" width="12.300" height="12.300" rx=".7" style="fill:#fff;stroke:#737373;stroke-width:1.500"/><g style="fill:none;stroke:#666;stroke-width:1.300"><path d="M3 6.900H10.800M6.900 3V10.800"/></g></svg>
<span class="t" style="left:135.14px;top:701.39px;font-size:14px;line-height:16px;color:#222;letter-spacing:0.412px;font-weight:700;">25/5/23 3:30 PM</span>
<span class="t" style="left:741.49px;top:702.39px;font-size:13.5px;line-height:15px;color:#222;letter-spacing:0.295px;">00:00:00</span>
<span class="t" style="left:911.81px;top:702.39px;font-size:13.5px;line-height:15px;color:#222;">0</span>
<span class="t" style="left:1049.52px;top:702.39px;font-size:13.5px;line-height:15px;color:#222;">::</span>
<span class="t" style="left:1143.29px;top:702.39px;font-size:13.5px;line-height:15px;color:#222;letter-spacing:0.295px;">00:00:00</span>
<span class="t" style="left:1256.79px;top:702.39px;font-size:13.5px;line-height:15px;color:#222;letter-spacing:0.295px;">00:00:00</span>
<span class="t" style="left:1396.72px;top:702.39px;font-size:13.5px;line-height:15px;color:#222;">::</span>
<span class="t" style="left:1512.22px;top:702.39px;font-size:13.5px;line-height:15px;color:#222;">::</span>
<span class="t" style="left:1651.81px;top:702.39px;font-size:13.5px;line-height:15px;color:#222;">0</span>
<span class="t" style="left:1795.61px;top:702.39px;font-size:13.5px;line-height:15px;color:#222;">0</span>
<div class="abs" style="left:603.4px;top:724px;width:1258.6px;height:28px;background:#a9dce6"></div>
<div class="abs" style="left:98.5px;top:752px;width:504.9px;height:1px;background:#e4e4e4"></div>
<svg style="left:114px;top:731px" width="14" height="14" viewBox="0 0 14 14"><rect x=".75" y=".75" width="12.300" height="12.300" rx=".7" style="fill:#fff;stroke:#737373;stroke-width:1.500"/><g style="fill:none;stroke:#666;stroke-width:1.300"><path d="M3 6.900H10.800M6.900 3V10.800"/></g></svg>
<span class="t" style="left:135.14px;top:729.73px;font-size:14px;line-height:16px;color:#222;letter-spacing:0.412px;font-weight:700;">25/5/23 2:00 PM</span>
<span class="t" style="left:641.91px;top:730.73px;font-size:13.5px;line-height:15px;color:#222;letter-spacing:0.346px;">100.00%</span>
<span class="t" style="left:741.49px;top:730.73px;font-size:13.5px;line-height:15px;color:#222;letter-spacing:0.295px;">00:03:30</span>
<span class="t" style="left:911.81px;top:730.73px;font-size:13.5px;line-height:15px;color:#222;">0</span>
<span class="t" style="left:1001.76px;top:730.73px;font-size:13.5px;line-height:15px;color:#222;letter-spacing:0.294px;">00:02:23</span>
<span class="t" style="left:1143.29px;top:730.73px;font-size:13.5px;line-height:15px;color:#222;letter-spacing:0.295px;">00:00:00</span>
<span class="t" style="left:1256.86px;top:730.73px;font-size:13.5px;line-height:15px;color:#222;letter-spacing:0.294px;">03:56:03</span>
<span class="t" style="left:1348.75px;top:730.73px;font-size:13.5px;line-height:15px;color:#222;letter-spacing:0.296px;">00:01:54</span>
<span class="t" style="left:1512.22px;top:730.73px;font-size:13.5px;line-height:15px;color:#222;">::</span>
<span class="t" style="left:1651.88px;top:730.73px;font-size:13.5px;line-height:15px;color:#222;">3</span>
<span class="t" style="left:1795.68px;top:730.73px;font-size:13.5px;line-height:15px;color:#222;">3</span>
<div class="abs" style="left:98.5px;top:780px;width:504.9px;height:1px;background:#e4e4e4"></div>
<svg style="left:114px;top:759px" width="14" height="14" viewBox="0 0 14 14"><rect x=".75" y=".75" width="12.300" height="12.300" rx=".7" style="fill:#fff;stroke:#737373;stroke-width:1.500"/><g style="fill:none;stroke:#666;stroke-width:1.300"><path d="M3 6.900H10.800M6.900 3V10.800"/></g></svg>
<span class="t" style="left:135.14px;top:758.06px;font-size:14px;line-height:16px;color:#222;letter-spacing:0.412px;font-weight:700;">25/5/23 1:30 PM</span>
<span class="t" style="left:641.91px;top:759.06px;font-size:13.5px;line-height:15px;color:#222;letter-spacing:0.346px;">100.00%</span>
<span class="t" style="left:741.53px;top:759.06px;font-size:13.5px;line-height:15px;color:#222;letter-spacing:0.295px;">00:00:05</span>
<span class="t" style="left:911.81px;top:759.06px;font-size:13.5px;line-height:15px;color:#222;">0</span>
<span class="t" style="left:1001.55px;top:759.06px;font-size:13.5px;line-height:15px;color:#222;letter-spacing:0.296px;">00:00:34</span>
<span class="t" style="left:1143.29px;top:759.06px;font-size:13.5px;line-height:15px;color:#222;letter-spacing:0.295px;">00:00:00</span>
<span class="t" style="left:1256.86px;top:759.06px;font-size:13.5px;line-height:15px;color:#222;letter-spacing:0.294px;">00:06:13</span>
<span class="t" style="left:1396.72px;top:759.06px;font-size:13.5px;line-height:15px;color:#222;">::</span>
<span class="t" style="left:1512.22px;top:759.06px;font-size:13.5px;line-height:15px;color:#222;">::</span>
<span class="t" style="left:1651.95px;top:759.06px;font-size:13.5px;line-height:15px;color:#222;">1</span>
<span class="t" style="left:1795.75px;top:759.06px;font-size:13.5px;line-height:15px;color:#222;">1</span>
<div class="abs" style="left:603.4px;top:781px;width:1258.6px;height:27px;background:#a9dce6"></div>
<div class="abs" style="left:98.5px;top:808px;width:504.9px;height:1px;background:#e4e4e4"></div>
<svg style="left:114px;top:788px" width="14" height="14" viewBox="0 0 14 14"><rect x=".75" y=".75" width="12.300" height="12.300" rx=".7" style="fill:#fff;stroke:#737373;stroke-width:1.500"/><g style="fill:none;stroke:#666;stroke-width:1.300"><path d="M3 6.900H10.800M6.900 3V10.800"/></g></svg>
<span class="t" style="left:135.14px;top:786.39px;font-size:14px;line-height:16px;color:#222;letter-spacing:0.412px;font-weight:700;">25/5/23 1:00 PM</span>
<span class="t" style="left:741.49px;top:787.39px;font-size:13.5px;line-height:15px;color:#222;letter-spacing:0.295px;">00:00:00</span>
<span class="t" style="left:911.81px;top:787.39px;font-size:13.5px;line-height:15px;color:#222;">0</span>
<span class="t" style="left:1049.52px;top:787.39px;font-size:13.5px;line-height:15px;color:#222;">::</span>
<span class="t" style="left:1143.29px;top:787.39px;font-size:13.5px;line-height:15px;color:#222;letter-spacing:0.295px;">00:00:00</span>
<span class="t" style="left:1256.79px;top:787.39px;font-size:13.5px;line-height:15px;color:#222;letter-spacing:0.295px;">00:00:00</span>
<span class="t" style="left:1396.72px;top:787.39px;font-size:13.5px;line-height:15px;color:#222;">::</span>
<span class="t" style="left:1512.22px;top:787.39px;font-size:13.5px;line-height:15px;color:#222;">::</span>
<span class="t" style="left:1651.81px;top:787.39px;font-size:13.5px;line-height:15px;color:#222;">0</span>
<span class="t" style="left:1795.61px;top:787.39px;font-size:13.5px;line-height:15px;color:#222;">0</span>
<div class="abs" style="left:98.5px;top:837px;width:504.9px;height:1px;background:#e4e4e4"></div>
<svg style="left:114px;top:816px" width="14" height="14" viewBox="0 0 14 14"><rect x=".75" y=".75" width="12.300" height="12.300" rx=".7" style="fill:#fff;stroke:#737373;stroke-width:1.500"/><g style="fill:none;stroke:#666;stroke-width:1.300"><path d="M3 6.900H10.800M6.900 3V10.800"/></g></svg>
<span class="t" style="left:135.14px;top:814.73px;font-size:14px;line-height:16px;color:#222;letter-spacing:0.414px;font-weight:700;">25/5/23 12:30 PM</span>
<span class="t" style="left:641.91px;top:815.73px;font-size:13.5px;line-height:15px;color:#222;letter-spacing:0.346px;">100.00%</span>
<span class="t" style="left:741.60px;top:815.73px;font-size:13.5px;line-height:15px;color:#222;letter-spacing:0.294px;">01:09:09</span>
<span class="t" style="left:911.81px;top:815.73px;font-size:13.5px;line-height:15px;color:#222;">0</span>
<span class="t" style="left:1001.80px;top:815.73px;font-size:13.5px;line-height:15px;color:#222;letter-spacing:0.294px;">00:00:39</span>
<span class="t" style="left:1143.29px;top:815.73px;font-size:13.5px;line-height:15px;color:#222;letter-spacing:0.295px;">00:00:00</span>
<span class="t" style="left:1256.65px;top:815.73px;font-size:13.5px;line-height:15px;color:#222;letter-spacing:0.296px;">01:09:54</span>
<span class="t" style="left:1348.96px;top:815.73px;font-size:13.5px;line-height:15px;color:#222;letter-spacing:0.294px;">00:00:06</span>
<span class="t" style="left:1512.22px;top:815.73px;font-size:13.5px;line-height:15px;color:#222;">::</span>
<span class="t" style="left:1651.95px;top:815.73px;font-size:13.5px;line-height:15px;color:#222;">1</span>
<span class="t" style="left:1795.75px;top:815.73px;font-size:13.5px;line-height:15px;color:#222;">1</span>
<div class="abs" style="left:603.4px;top:838px;width:1258.6px;height:27px;background:#a9dce6"></div>
<div class="abs" style="left:98.5px;top:865px;width:504.9px;height:1px;background:#e4e4e4"></div>
<svg style="left:114px;top:844px" width="14" height="14" viewBox="0 0 14 14"><rect x=".75" y=".75" width="12.300" height="12.300" rx=".7" style="fill:#fff;stroke:#737373;stroke-width:1.500"/><g style="fill:none;stroke:#666;stroke-width:1.300"><path d="M3 6.900H10.800M6.900 3V10.800"/></g></svg>
<span class="t" style="left:135.14px;top:843.06px;font-size:14px;line-height:16px;color:#222;letter-spacing:0.412px;font-weight:700;">25/5/23 11:30 AM</span>
<span class="t" style="left:741.49px;top:844.06px;font-size:13.5px;line-height:15px;color:#222;letter-spacing:0.295px;">00:00:00</span>
<span class="t" style="left:911.81px;top:844.06px;font-size:13.5px;line-height:15px;color:#222;">0</span>
<span class="t" style="left:1049.52px;top:844.06px;font-size:13.5px;line-height:15px;color:#222;">::</span>
<span class="t" style="left:1143.29px;top:844.06px;font-size:13.5px;line-height:15px;color:#222;letter-spacing:0.295px;">00:00:00</span>
<span class="t" style="left:1256.79px;top:844.06px;font-size:13.5px;line-height:15px;color:#222;letter-spacing:0.295px;">00:00:00</span>
<span class="t" style="left:1396.72px;top:844.06px;font-size:13.5px;line-height:15px;color:#222;">::</span>
<span class="t" style="left:1512.22px;top:844.06px;font-size:13.5px;line-height:15px;color:#222;">::</span>
<span class="t" style="left:1651.81px;top:844.06px;font-size:13.5px;line-height:15px;color:#222;">0</span>
<span class="t" style="left:1795.61px;top:844.06px;font-size:13.5px;line-height:15px;color:#222;">0</span>
<div class="abs" style="left:98.5px;top:893px;width:504.9px;height:1px;background:#e4e4e4"></div>
<svg style="left:114px;top:873px" width="14" height="14" viewBox="0 0 14 14"><rect x=".75" y=".75" width="12.300" height="12.300" rx=".7" style="fill:#fff;stroke:#737373;stroke-width:1.500"/><g style="fill:none;stroke:#666;stroke-width:1.300"><path d="M3 6.900H10.800M6.900 3V10.800"/></g></svg>
<span class="t" style="left:135.14px;top:871.39px;font-size:14px;line-height:16px;color:#222;letter-spacing:0.412px;font-weight:700;">25/5/23 11:00 AM</span>
<span class="t" style="left:741.63px;top:872.39px;font-size:13.5px;line-height:15px;color:#222;letter-spacing:0.294px;">01:19:37</span>
<span class="t" style="left:911.81px;top:872.39px;font-size:13.5px;line-height:15px;color:#222;">0</span>
<span class="t" style="left:1049.52px;top:872.39px;font-size:13.5px;line-height:15px;color:#222;">::</span>
<span class="t" style="left:1143.29px;top:872.39px;font-size:13.5px;line-height:15px;color:#222;letter-spacing:0.295px;">00:00:00</span>
<span class="t" style="left:1256.93px;top:872.39px;font-size:13.5px;line-height:15px;color:#222;letter-spacing:0.294px;">01:19:37</span>
<span class="t" style="left:1396.72px;top:872.39px;font-size:13.5px;line-height:15px;color:#222;">::</span>
<span class="t" style="left:1512.22px;top:872.39px;font-size:13.5px;line-height:15px;color:#222;">::</span>
<span class="t" style="left:1651.81px;top:872.39px;font-size:13.5px;line-height:15px;color:#222;">0</span>
<span class="t" style="left:1795.61px;top:872.39px;font-size:13.5px;line-height:15px;color:#222;">0</span>
<div class="abs" style="left:603.4px;top:894px;width:1258.6px;height:28px;background:#a9dce6"></div>
<div class="abs" style="left:98.5px;top:922px;width:504.9px;height:1px;background:#e4e4e4"></div>
<svg style="left:114px;top:901px" width="14" height="14" viewBox="0 0 14 14"><rect x=".75" y=".75" width="12.300" height="12.300" rx=".7" style="fill:#fff;stroke:#737373;stroke-width:1.500"/><g style="fill:none;stroke:#666;stroke-width:1.300"><path d="M3 6.900H10.800M6.900 3V10.800"/></g></svg>
<span class="t" style="left:135.14px;top:899.72px;font-size:14px;line-height:16px;color:#222;letter-spacing:0.414px;font-weight:700;">25/5/23 9:00 AM</span>
<span class="t" style="left:649.68px;top:900.72px;font-size:13.5px;line-height:15px;color:#222;letter-spacing:0.359px;">50.00%</span>
<span class="t" style="left:741.49px;top:900.72px;font-size:13.5px;line-height:15px;color:#222;letter-spacing:0.295px;">00:00:00</span>
<span class="t" style="left:911.95px;top:900.72px;font-size:13.5px;line-height:15px;color:#222;">2</span>
<span class="t" style="left:1001.83px;top:900.72px;font-size:13.5px;line-height:15px;color:#222;letter-spacing:0.294px;">00:00:57</span>
<span class="t" style="left:1143.29px;top:900.72px;font-size:13.5px;line-height:15px;color:#222;letter-spacing:0.295px;">00:00:00</span>
<span class="t" style="left:1256.79px;top:900.72px;font-size:13.5px;line-height:15px;color:#222;letter-spacing:0.295px;">00:00:00</span>
<span class="t" style="left:1348.89px;top:900.72px;font-size:13.5px;line-height:15px;color:#222;letter-spacing:0.295px;">00:01:00</span>
<span class="t" style="left:1512.22px;top:900.72px;font-size:13.5px;line-height:15px;color:#222;">::</span>
<span class="t" style="left:1651.95px;top:900.72px;font-size:13.5px;line-height:15px;color:#222;">2</span>
<span class="t" style="left:1795.61px;top:900.72px;font-size:13.5px;line-height:15px;color:#222;">0</span>
<div class="abs" style="left:602.9px;top:383px;width:1px;height:540px;background:rgba(225,228,230,.9)"></div>
<div class="abs" style="left:706.7px;top:383px;width:1px;height:540px;background:rgba(225,228,230,.9)"></div>
<div class="abs" style="left:805.5px;top:383px;width:1px;height:540px;background:rgba(225,228,230,.9)"></div>
<div class="abs" style="left:928.7px;top:383px;width:1px;height:540px;background:rgba(225,228,230,.9)"></div>
<div class="abs" style="left:1065.7px;top:383px;width:1px;height:540px;background:rgba(225,228,230,.9)"></div>
<div class="abs" style="left:1207.3px;top:383px;width:1px;height:540px;background:rgba(225,228,230,.9)"></div>
<div class="abs" style="left:1320.8px;top:383px;width:1px;height:540px;background:rgba(225,228,230,.9)"></div>
<div class="abs" style="left:1412.9px;top:383px;width:1px;height:540px;background:rgba(225,228,230,.9)"></div>
<div class="abs" style="left:1528.4px;top:383px;width:1px;height:540px;background:rgba(225,228,230,.9)"></div>
<div class="abs" style="left:1668.7px;top:383px;width:1px;height:540px;background:rgba(225,228,230,.9)"></div>
<div class="abs" style="left:1812.5px;top:383px;width:1px;height:540px;background:rgba(225,228,230,.9)"></div>
<div class="abs" style="left:291px;top:383px;width:1px;height:284px;background:#e4e4e4"></div>
<div class="abs" style="left:98.0px;top:383px;width:1px;height:540px;background:#e4e4e4"></div>
<div class="abs" style="left:603.4px;top:383px;width:1258.6px;height:1px;background:#f3f6f7"></div>
<div class="abs" style="left:603.4px;top:412px;width:1258.6px;height:1px;background:#f3f6f7"></div>
<div class="abs" style="left:603.4px;top:440px;width:1258.6px;height:1px;background:#f3f6f7"></div>
<div class="abs" style="left:603.4px;top:468px;width:1258.6px;height:1px;background:#f3f6f7"></div>
<div class="abs" style="left:603.4px;top:497px;width:1258.6px;height:1px;background:#f3f6f7"></div>
<div class="abs" style="left:603.4px;top:525px;width:1258.6px;height:1px;background:#f3f6f7"></div>
<div class="abs" style="left:603.4px;top:553px;width:1258.6px;height:1px;background:#f3f6f7"></div>
<div class="abs" style="left:603.4px;top:582px;width:1258.6px;height:1px;background:#f3f6f7"></div>
<div class="abs" style="left:603.4px;top:610px;width:1258.6px;height:1px;background:#f3f6f7"></div>
<div class="abs" style="left:603.4px;top:638px;width:1258.6px;height:1px;background:#f3f6f7"></div>
<div class="abs" style="left:603.4px;top:667px;width:1258.6px;height:1px;background:#f3f6f7"></div>
<div class="abs" style="left:603.4px;top:695px;width:1258.6px;height:1px;background:#f3f6f7"></div>
<div class="abs" style="left:603.4px;top:723px;width:1258.6px;height:1px;background:#f3f6f7"></div>
<div class="abs" style="left:603.4px;top:752px;width:1258.6px;height:1px;background:#f3f6f7"></div>
<div class="abs" style="left:603.4px;top:780px;width:1258.6px;height:1px;background:#f3f6f7"></div>
<div class="abs" style="left:603.4px;top:808px;width:1258.6px;height:1px;background:#f3f6f7"></div>
<div class="abs" style="left:603.4px;top:837px;width:1258.6px;height:1px;background:#f3f6f7"></div>
<div class="abs" style="left:603.4px;top:865px;width:1258.6px;height:1px;background:#f3f6f7"></div>
<div class="abs" style="left:603.4px;top:893px;width:1258.6px;height:1px;background:#f3f6f7"></div>
<div class="abs" style="left:603.4px;top:922px;width:1258.6px;height:1px;background:#f3f6f7"></div>
<svg style="left:0;top:0" width="300" height="600" viewBox="0 0 300 600"><rect x="99.250" y="498.550" width="190.800" height="54.800" fill="none" stroke="#1c1c1c" stroke-width="1.700"/></svg>
<div class="abs" style="left:1863px;top:356px;width:7.500px;height:53px;border-radius:4px;background:#ababab"></div>
<div class="frame"></div>
</body></html>
